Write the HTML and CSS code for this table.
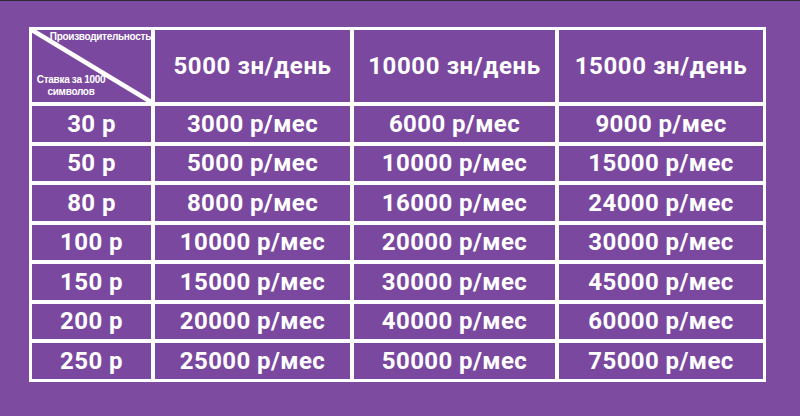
FILE: index.html
```html
<!DOCTYPE html>
<html lang="ru">
<head>
<meta charset="utf-8">
<link rel="stylesheet" href="styles.css">
</head>
<body>
<div class="page">
  <div class="grid">
    <div class="cell corner">
      <svg class="diag" viewBox="0 0 119 72" preserveAspectRatio="none"><line x1="0" y1="0" x2="119" y2="72" stroke="#fff" stroke-width="4.5"/></svg>
      <span class="c-top">Производительность</span>
      <span class="c-bottom">Ставка за 1000<br>символов</span>
    </div>
    <div class="cell head">5000 зн/день</div>
    <div class="cell head">10000 зн/день</div>
    <div class="cell head">15000 зн/день</div>

    <div class="cell">30 р</div><div class="cell">3000 р/мес</div><div class="cell">6000 р/мес</div><div class="cell">9000 р/мес</div>
    <div class="cell">50 р</div><div class="cell">5000 р/мес</div><div class="cell">10000 р/мес</div><div class="cell">15000 р/мес</div>
    <div class="cell">80 р</div><div class="cell">8000 р/мес</div><div class="cell">16000 р/мес</div><div class="cell">24000 р/мес</div>
    <div class="cell">100 р</div><div class="cell">10000 р/мес</div><div class="cell">20000 р/мес</div><div class="cell">30000 р/мес</div>
    <div class="cell">150 р</div><div class="cell">15000 р/мес</div><div class="cell">30000 р/мес</div><div class="cell">45000 р/мес</div>
    <div class="cell">200 р</div><div class="cell">20000 р/мес</div><div class="cell">40000 р/мес</div><div class="cell">60000 р/мес</div>
    <div class="cell">250 р</div><div class="cell">25000 р/мес</div><div class="cell">50000 р/мес</div><div class="cell">75000 р/мес</div>
  </div>
</div>
</body>
</html>
```
FILE: styles.css
```css
html, body {
  margin: 0;
  padding: 0;
}
body {
  width: 800px;
  height: 416px;
  background: #7d4b9f;
  overflow: hidden;
}
.page {
  height: 415px;
  border-top: 1px solid #2e2a33;
  padding: 26px 0 0 29px;
  box-sizing: border-box;
}
.grid {
  display: grid;
  width: 737px;
  grid-template-columns: 119px 195px 201px 204px;
  grid-template-rows: 72px repeat(7, 35.5px);
  gap: 4px;
  padding: 3px;
  background: #fff;
  box-sizing: border-box;
}
.cell {
  background: #7b48a0;
  color: #fff;
  font-family: Roboto, "Liberation Sans", sans-serif;
  font-weight: 700;
  font-size: 24px;
  letter-spacing: 0.4px;
  display: flex;
  align-items: center;
  justify-content: center;
  white-space: nowrap;
}
.head {
  font-size: 24px;
  letter-spacing: 0.6px;
}
.corner {
  position: relative;
  display: block;
  font-family: "Liberation Sans", Arial, sans-serif;
  font-weight: 700;
  font-size: 10px;
  letter-spacing: -0.3px;
}
.diag {
  position: absolute;
  left: 0;
  top: 0;
  width: 100%;
  height: 100%;
}
.c-top {
  position: absolute;
  right: 0;
  top: 1px;
}
.c-bottom {
  position: absolute;
  left: 3px;
  bottom: 4px;
  width: 72px;
  text-align: center;
  line-height: 12px;
}
```
